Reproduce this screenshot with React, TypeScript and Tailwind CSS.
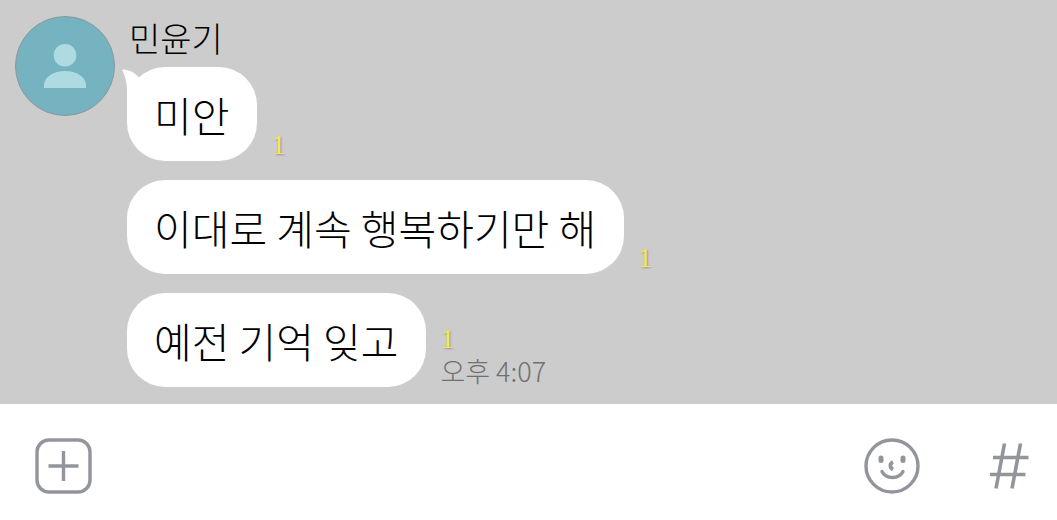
const messages = [
	{ id: 1, text: "미안", unread: 1 },
	{ id: 2, text: "이대로 계속 행복하기만 해", unread: 1 },
	{ id: 3, text: "예전 기억 잊고", unread: 1, time: "오후 4:07" },
];

function Avatar() {
	return (
		<svg className="w-25 h-25 shrink-0" viewBox="0 0 100 100" role="img">
			<title>민윤기</title>
			<circle cx="50" cy="50" r="49.5" fill="#76b3c0" stroke="#8b989b" />
			<circle cx="50" cy="39.2" r="11.3" fill="#addbe1" />
			<path d="M29 72v-3c0-8 10-14 21-14s21 6 21 14v3z" fill="#addbe1" />
		</svg>
	);
}

function BubbleTail() {
	return (
		<svg
			className="absolute -left-1.5 top-0 w-8 h-12"
			viewBox="0 0 32 48"
			fill="#fff"
			aria-hidden="true"
		>
			<path d="M1 2.500C7 2.500 13 5 17 9.500L27 14 12 40 6 42V23C6 14 3.500 8 1 2.500z" />
		</svg>
	);
}

function Unread({ count }: { count: number }) {
	return (
		<span className="font-['Liberation_Serif',serif] text-[28px] leading-8 text-[#f5e84f] [text-shadow:1px_1px_2px_rgba(0,0,0,0.3)]">
			{count}
		</span>
	);
}

function Composer() {
	return (
		<form
			className="grow flex items-center bg-white pt-3 pb-1 pl-[35px] pr-7 text-[#92959c]"
			onSubmit={(e) => e.preventDefault()}
		>
			<button type="button" aria-label="추가">
				<svg
					className="w-[57px] h-14"
					viewBox="0 0 57 56"
					fill="none"
					stroke="currentColor"
					strokeWidth="3.4"
					aria-hidden="true"
				>
					<rect x="2" y="2" width="53" height="52" rx="12" />
					<path d="M28.5 13v30M13.500 28h30" />
				</svg>
			</button>
			<input
				type="text"
				aria-label="메시지 입력"
				className="grow min-w-0 h-14 mx-6 bg-transparent text-3xl text-black outline-none"
			/>
			<button type="button" aria-label="이모티콘">
				<svg
					className="w-14 h-14"
					viewBox="0 0 56 56"
					fill="none"
					stroke="currentColor"
					strokeWidth="3.4"
					strokeLinecap="round"
					aria-hidden="true"
				>
					<circle cx="28" cy="28" r="26" />
					<path d="M17 20v2.500M39 20v2.500" strokeWidth="5" />
					<path
						d="M29 24c-3.500 1.500-3.500 5.500 0 7.500"
						strokeWidth="3.800"
						strokeLinecap="butt"
					/>
					<path d="M18 33.500c4 8 17 8 21 0" />
				</svg>
			</button>
			<button type="button" aria-label="샵검색" className="ml-[69px]">
				<svg
					className="w-10 h-12"
					viewBox="0 0 40 48"
					fill="none"
					stroke="currentColor"
					strokeWidth="3.6"
					aria-hidden="true"
				>
					<path d="M15.500 1.500L7 46.500M31.500 1.500L23 46.500M4 15.500h35.500M1 32.500h35.500" />
				</svg>
			</button>
		</form>
	);
}

export default function App() {
	return (
		<div className="min-h-screen flex flex-col bg-[#cccccc] font-['Noto_Sans_CJK_KR',sans-serif] font-light text-black">
			<main className="flex gap-3 pt-4 pl-[15px] pr-4 pb-[17px]">
				<Avatar />
				<section className="grow min-w-0">
					<h1 className="pl-0.5 pb-2 text-[34px] leading-[43px]">민윤기</h1>
					<ul className="flex flex-col gap-[19px]">
						{messages.map((message, i) => (
							<li key={message.id} className="flex items-end gap-3.5">
								<div className="relative">
									{i === 0 && <BubbleTail />}
									<p className="relative pl-[27px] pr-7 py-5 rounded-[38px] bg-white text-[41px] leading-[54px]">
										{message.text}
									</p>
								</div>
								<div className="flex flex-col items-start">
									<Unread count={message.unread} />
									{message.time && (
										<time
											dateTime="16:07"
											className="text-[27px] leading-8 text-[#707070]"
										>
											{message.time}
										</time>
									)}
								</div>
							</li>
						))}
					</ul>
				</section>
			</main>
			<Composer />
		</div>
	);
}
